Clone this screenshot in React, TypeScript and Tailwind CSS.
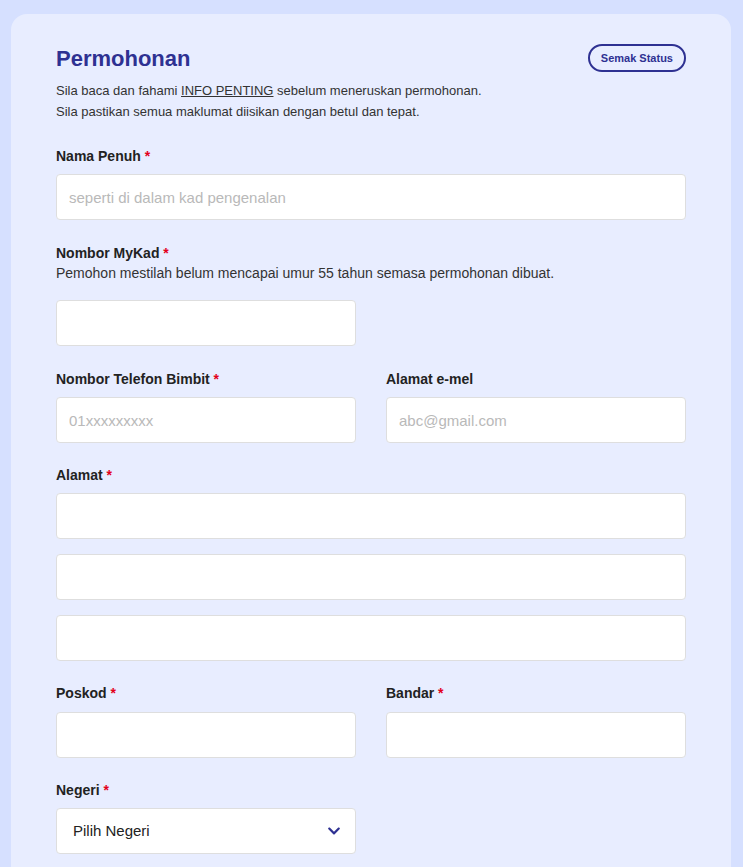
import { FaChevronDown } from 'react-icons/fa';

function Label({ text, required }: { text: string; required?: boolean }) {
  return (
    <label className="block text-[14px] leading-5 font-bold text-[#222]">
      {text}
      {required && <span className="text-[#e3001b]"> *</span>}
    </label>
  );
}

function Input({ placeholder }: { placeholder?: string }) {
  return (
    <input
      type="text"
      placeholder={placeholder}
      className="block w-full h-[46px] rounded-[4px] border border-[#dedede] bg-white px-3 text-[15px] text-[#222] placeholder:text-[#b9b9b9] outline-none"
    />
  );
}

export default function App() {
  return (
    <div className="min-h-screen bg-[#d6e0ff] px-[11px] pt-[14px] font-['Liberation_Sans',Arial,sans-serif]">
      <div className="w-[720px] rounded-t-[16px] bg-[#e8edff] px-[45px] pt-[31px] pb-10">
        {/* Header */}
        <div className="flex items-start justify-between">
          <h1 className="text-[22px] leading-7 font-bold text-[#2e3192]">Permohonan</h1>
          <button className="-mt-px h-[28px] rounded-full border-2 border-[#2e3192] px-[11px] text-[11px] font-bold text-[#2e3192]">
            Semak Status
          </button>
        </div>
        <div className="mt-[7px] text-[13px] leading-[21px] text-[#333]">
          <p>
            Sila baca dan fahami <a className="underline">INFO PENTING</a> sebelum meneruskan permohonan.
          </p>
          <p>Sila pastikan semua maklumat diisikan dengan betul dan tepat.</p>
        </div>

        <div className="mt-[24px] flex flex-col gap-[22px]">
          <div>
            <Label text="Nama Penuh" required />
            <div className="mt-[8px]">
              <Input placeholder="seperti di dalam kad pengenalan" />
            </div>
          </div>

          <div className="mt-px">
            <Label text="Nombor MyKad" required />
            <p className="text-[14px] leading-[21px] text-[#333]">
              Pemohon mestilah belum mencapai umur 55 tahun semasa permohonan dibuat.
            </p>
            <div className="mt-[16px] w-[300px]">
              <Input />
            </div>
          </div>

          <div className="mt-px grid grid-cols-2 gap-[30px]">
            <div>
              <Label text="Nombor Telefon Bimbit" required />
              <div className="mt-[8px]">
                <Input placeholder="01xxxxxxxxx" />
              </div>
            </div>
            <div>
              <Label text="Alamat e-mel" />
              <div className="mt-[8px]">
                <Input placeholder="abc@gmail.com" />
              </div>
            </div>
          </div>

          <div>
            <Label text="Alamat" required />
            <div className="mt-[8px] flex flex-col gap-[15px]">
              <Input />
              <Input />
              <Input />
            </div>
          </div>

          <div className="grid grid-cols-2 gap-[30px]">
            <div>
              <Label text="Poskod" required />
              <div className="mt-[9px]">
                <Input />
              </div>
            </div>
            <div>
              <Label text="Bandar" required />
              <div className="mt-[9px]">
                <Input />
              </div>
            </div>
          </div>

          <div>
            <Label text="Negeri" required />
            <div className="mt-[8px] w-[300px]">
              <div className="flex h-[46px] items-center justify-between rounded-[4px] border border-[#dedede] bg-white pl-4 pr-[14px] text-[15px] text-[#222]">
                <span>Pilih Negeri</span>
                <FaChevronDown className="h-[14px] w-[14px] text-[#2e3192]" />
              </div>
            </div>
          </div>
        </div>
      </div>
    </div>
  );
}
